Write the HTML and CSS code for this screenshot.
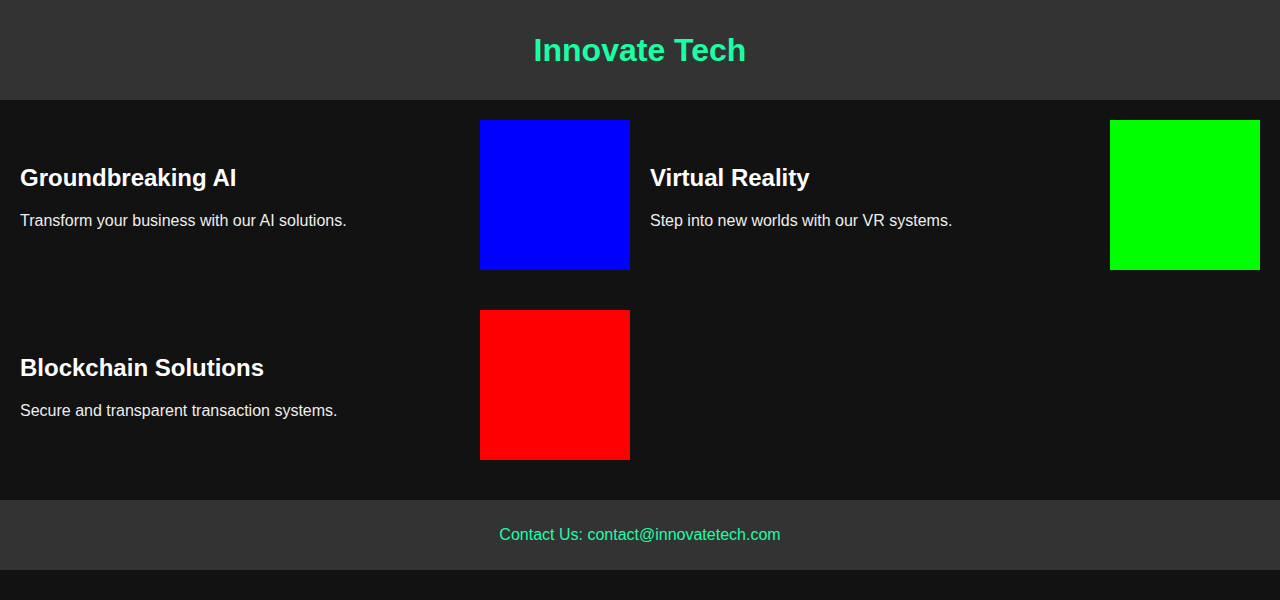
FILE: index.html
```html
<!DOCTYPE html>
<html>
<head>
<meta charset="utf-8">
<link rel="stylesheet" href="styles.css">
</head>
<body>
<header class="header"><h1 class="title">Innovate Tech</h1></header>
<main class="grid">
  <div class="card">
    <div class="text"><h2>Groundbreaking AI</h2><p>Transform your business with our AI solutions.</p></div>
    <div class="box blue"></div>
  </div>
  <div class="card">
    <div class="text"><h2>Virtual Reality</h2><p>Step into new worlds with our VR systems.</p></div>
    <div class="box green"></div>
  </div>
  <div class="card">
    <div class="text"><h2>Blockchain Solutions</h2><p>Secure and transparent transaction systems.</p></div>
    <div class="box red"></div>
  </div>
</main>
<footer class="footer">Contact Us: contact@innovatetech.com</footer>
</body>
</html>
```
FILE: styles.css
```css
html, body { margin: 0; background: #121212; font-family: "Liberation Sans", Arial, sans-serif; }
.header { background: #333; height: 100px; display: flex; align-items: center; justify-content: center; }
.title { margin: 0; font-size: 32px; color: #1affa3; }
.grid { display: grid; grid-template-columns: 1fr 1fr; column-gap: 20px; row-gap: 40px; padding: 20px 20px 40px; }
.card { display: flex; align-items: center; justify-content: space-between; }
.text h2 { font-size: 24px; color: #fff; margin: 20px 0; }
.text p { font-size: 16px; color: #eee; margin: 16px 0; }
.box { width: 150px; height: 150px; flex: none; }
.blue { background: #0000ff; }
.green { background: #00ff00; }
.red { background: #ff0000; }
.footer { background: #333; height: 70px; display: flex; align-items: center; justify-content: center; color: #1affa3; font-size: 16px; }
```
